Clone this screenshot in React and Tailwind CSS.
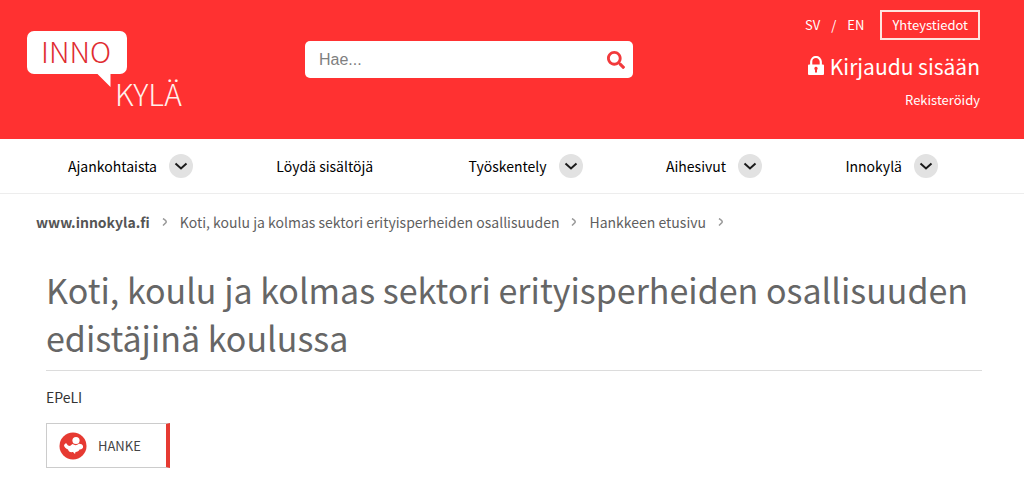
import { FaSearch } from "react-icons/fa";

const menuItems = [
    { name: "Ajankohtaista", dropdown: true },
    { name: "Löydä sisältöjä", dropdown: false },
    { name: "Työskentely", dropdown: true },
    { name: "Aihesivut", dropdown: true },
    { name: "Innokylä", dropdown: true },
];

const crumbs = [
    "www.innokyla.fi",
    "Koti, koulu ja kolmas sektori erityisperheiden osallisuuden",
    "Hankkeen etusivu",
];

function Logo() {
    return (
        <svg viewBox="0 0 160 96" className="h-24 w-40" role="img" aria-label="Innokylä">
            <path d="M8 1h86a7 7 0 0 1 7 7v29a7 7 0 0 1-7 7H84.500v13L71.500 44H8a7 7 0 0 1-7-7V8a7 7 0 0 1 7-7z" fill="#fff" />
            <text x="15" y="33" fontSize="29" fontWeight="300" fill="#e02c30" fontFamily="'Noto Sans CJK SC', sans-serif">INNO</text>
            <text x="89" y="76" fontSize="30" fontWeight="300" fill="#fff0ec" fontFamily="'Noto Sans CJK SC', sans-serif">KYLÄ</text>
        </svg>
    );
}

function LockIcon() {
    return (
        <svg viewBox="0 0 16 20" className="h-5 w-4" fill="none">
            <path d="M3.200 9V5.800a4.800 4.800 0 0 1 9.600 0V9" stroke="#fff" strokeWidth="2.200" />
            <path
                fill="#fff"
                fillRule="evenodd"
                d="M1 8.500h14a1 1 0 0 1 1 1V18a1 1 0 0 1-1 1H1a1 1 0 0 1-1-1V9.500a1 1 0 0 1 1-1zM8 10.800a1.800 1.800 0 0 0-1 3.200V16.500h2V14a1.800 1.800 0 0 0-1-3.200z"
            />
        </svg>
    );
}

function Header() {
    return (
        <header className="flex h-[139px] items-start bg-[#ff3131] pr-11 pl-[26px] text-white">
            <a href="#" className="mt-[30px] mr-[119px]">
                <Logo />
            </a>
            <form className="mt-[41px] flex h-[37px] w-[328px] items-center rounded-[5px] bg-white pr-2 pl-[14px]">
                <input
                    type="search"
                    aria-label="Hae"
                    placeholder="Hae..."
                    className="min-w-0 flex-1 bg-transparent font-['Liberation_Sans',sans-serif] text-base text-gray-700 outline-none placeholder:text-[#808080]"
                />
                <button type="submit" aria-label="Hae">
                    <FaSearch className="size-[18px] text-[#f23a3c]" />
                </button>
            </form>
            <div className="ml-auto flex flex-col items-end pt-[10px]">
                <div className="flex items-center text-[13px]">
                    <a href="#">SV</a>
                    <span className="mx-[11px]">/</span>
                    <a href="#">EN</a>
                    <a href="#" className="ml-4 flex h-[30px] items-center border-2 border-[#ffe5e0] px-[10px]">
                        Yhteystiedot
                    </a>
                </div>
                <a href="#" className="mt-2 flex items-center gap-[6px] text-[21px] leading-9">
                    <LockIcon />
                    Kirjaudu sisään
                </a>
                <a href="#" className="mt-[6px] text-[13px] leading-5">
                    Rekisteröidy
                </a>
            </div>
        </header>
    );
}

function Menu() {
    return (
        <nav className="flex h-[55px] items-center justify-between border-b border-[#ededed] pr-[86px] pl-[68px] text-sm text-black">
            {menuItems.map((item) => (
                <div key={item.name} className="flex items-center">
                    <a href="#" className="mr-3">{item.name}</a>
                    {item.dropdown && (
                        <button aria-label={item.name} className="flex size-6 items-center justify-center rounded-full bg-[#e2e2e2]">
                            <svg viewBox="0 0 14 8" className="h-2 w-[14px]" fill="none" stroke="#1a1a1a" strokeWidth="2">
                                <path d="M1.500 1.500L7 6.500l5.500-5" />
                            </svg>
                        </button>
                    )}
                </div>
            ))}
        </nav>
    );
}

function Breadcrumbs() {
    return (
        <ol className="flex items-center px-9 pt-[18px] text-sm leading-5 text-[#5f5f5f]">
            {crumbs.map((crumb, i) => (
                <li key={crumb} className="flex items-center">
                    <a href="#" className={i === 0 ? "font-bold text-[#555]" : ""}>{crumb}</a>
                    <svg viewBox="0 0 6 8" className="mx-3 h-2 w-[6px]" fill="none" stroke="#999" strokeWidth="1.500">
                        <path d="M1 .5Q5 3 4 4.500L1 7.500" />
                    </svg>
                </li>
            ))}
        </ol>
    );
}

function HankeIcon() {
    return (
        <svg viewBox="0 0 28 28" className="size-7">
            <circle cx="14" cy="14" r="13.500" fill="#e63a32" />
            <circle cx="17" cy="8.500" r="3.600" fill="#fff" />
            <path d="M5 13l2-2 2 2.500 2 .5 2.500-2c2 1.500 4.500 1.500 6 0 1.500-.5 4 .5 4.500 2 .5 2-1 3.500-3.500 3.500-.5 1.500-2 2.500-4 2.500l-.5 2-2-2c-3 .5-4.500-.5-5-2.500-2-.5-4-2.500-4-4.500z" fill="#fff" />
        </svg>
    );
}

export default function App() {
    return (
        <div className="bg-white font-['Noto_Sans_CJK_SC',sans-serif]">
            <Header />
            <Menu />
            <Breadcrumbs />
            <main className="mr-[42px] ml-[46px] pt-[34px]">
                <h1 className="border-b border-[#dcdcdc] pb-2 text-[34px] leading-12 text-[#666]">
                    Koti, koulu ja kolmas sektori erityisperheiden osallisuuden edistäjinä koulussa
                </h1>
                <p className="pt-4 text-sm leading-5 text-[#333]">EPeLI</p>
                <div className="mt-4 flex h-[45px] w-[124px] items-center gap-[11px] border border-r-4 border-[#ccc] border-r-[#e63a32] pl-3 text-[13px] text-[#444]">
                    <HankeIcon />
                    HANKE
                </div>
            </main>
        </div>
    );
}
